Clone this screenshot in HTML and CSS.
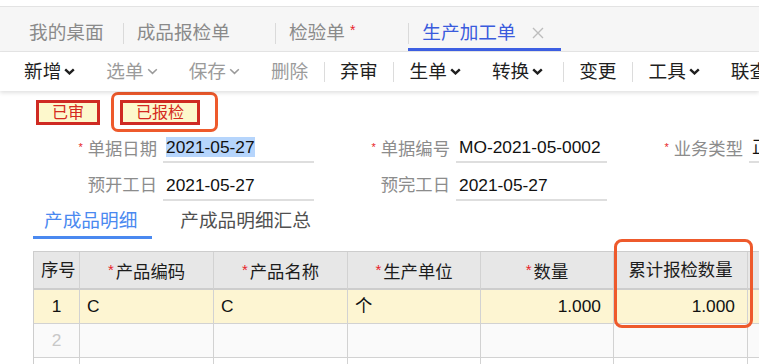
FILE: index.html
```html
<!DOCTYPE html>
<html lang="zh-CN">
<head>
<meta charset="utf-8">
<title>生产加工单</title>
<link rel="stylesheet" href="styles.css">
</head>
<body>
<nav class="tabbar">
  <div class="tab tab-home"><span class="tab-text">我的桌面</span></div>
  <div class="tab"><span class="tab-sep"></span><span class="tab-text">成品报检单</span><span class="tab-close is-hidden"><svg viewBox="0 0 12 12"><path d="M1 1L11 11M11 1L1 11"/></svg></span></div>
  <div class="tab"><span class="tab-sep"></span><span class="tab-text">检验单</span><span class="tab-dirty">*</span><span class="tab-close is-hidden"><svg viewBox="0 0 12 12"><path d="M1 1L11 11M11 1L1 11"/></svg></span></div>
  <div class="tab is-active"><span class="tab-sep"></span><span class="tab-text">生产加工单</span><span class="tab-close"><svg viewBox="0 0 12 12"><path d="M1 1L11 11M11 1L1 11"/></svg></span></div>
</nav>

<div class="toolbar">
  <span class="tool">新增<svg class="chev" viewBox="0 0 11 7"><path d="M1.2 1.3L5.5 5.4L9.8 1.3"/></svg></span>
  <span class="tool is-disabled">选单<svg class="chev" viewBox="0 0 11 7"><path d="M1.2 1.3L5.5 5.4L9.8 1.3"/></svg></span>
  <span class="tool is-disabled">保存<svg class="chev" viewBox="0 0 11 7"><path d="M1.2 1.3L5.5 5.4L9.8 1.3"/></svg></span>
  <span class="tool is-disabled">删除</span>
  <span class="tool-sep"></span>
  <span class="tool">弃审</span>
  <span class="tool-sep"></span>
  <span class="tool">生单<svg class="chev" viewBox="0 0 11 7"><path d="M1.2 1.3L5.5 5.4L9.8 1.3"/></svg></span>
  <span class="tool">转换<svg class="chev" viewBox="0 0 11 7"><path d="M1.2 1.3L5.5 5.4L9.8 1.3"/></svg></span>
  <span class="tool-sep tool-sep-wide"></span>
  <span class="tool">变更</span>
  <span class="tool-sep"></span>
  <span class="tool">工具<svg class="chev" viewBox="0 0 11 7"><path d="M1.2 1.3L5.5 5.4L9.8 1.3"/></svg></span>
  <span class="tool">联查</span>
</div>

<main class="content">
  <div class="status-row">
    <span class="badge">已审</span>
    <span class="callout"><span class="badge">已报检</span></span>
  </div>

  <div class="form">
    <div class="field"><span class="field-label"><i class="req">*</i>单据日期</span><div class="field-input"><span class="selected">2021-05-27</span></div></div>
    <div class="field"><span class="field-label"><i class="req">*</i>单据编号</span><div class="field-input">MO-2021-05-0002</div></div>
    <div class="field"><span class="field-label"><i class="req">*</i>业务类型</span><div class="field-input">正常生产</div></div>
    <div class="field"><span class="field-label">预开工日</span><div class="field-input">2021-05-27</div></div>
    <div class="field"><span class="field-label">预完工日</span><div class="field-input">2021-05-27</div></div>
  </div>

  <div class="subtabs">
    <span class="subtab is-active">产成品明细</span>
    <span class="subtab">产成品明细汇总</span>
  </div>

  <div class="grid">
    <div class="cell th">序号</div>
    <div class="cell th"><i class="req-th">*</i>产品编码</div>
    <div class="cell th"><i class="req-th">*</i>产品名称</div>
    <div class="cell th"><i class="req-th">*</i>生产单位</div>
    <div class="cell th"><i class="req-th">*</i>数量</div>
    <div class="cell th">累计报检数量</div>
    <div class="cell th"></div>

    <div class="cell row-cur idx">1</div>
    <div class="cell row-cur">C</div>
    <div class="cell row-cur">C</div>
    <div class="cell row-cur">个</div>
    <div class="cell row-cur num">1.000</div>
    <div class="cell row-cur num">1.000</div>
    <div class="cell row-cur"></div>

    <div class="cell row-alt idx muted">2</div>
    <div class="cell row-alt"></div>
    <div class="cell row-alt"></div>
    <div class="cell row-alt"></div>
    <div class="cell row-alt"></div>
    <div class="cell row-alt"></div>
    <div class="cell row-alt"></div>

    <div class="cell"></div>
    <div class="cell"></div>
    <div class="cell"></div>
    <div class="cell"></div>
    <div class="cell"></div>
    <div class="cell"></div>
    <div class="cell"></div>

    <div class="grid-mark"></div>
  </div>
</main>
</body>
</html>
```

FILE: styles.css
```css
* { box-sizing: border-box; }

html, body {
  margin: 0;
  padding: 0;
  background: #fff;
}

body {
  width: 759px;
  height: 364px;
  overflow: hidden;
  font-family: "Liberation Sans", "Noto Sans CJK SC", sans-serif;
  color: #1f1f1f;
}

/* ---------- window tabs ---------- */
.tabbar {
  margin-top: 6px;
  height: 46px;
  display: flex;
  padding-left: 15px;
  background: #f6f6f6;
  border-top: 1px solid #e3e3e3;
  border-bottom: 1px solid #e6e6e6;
  font-size: 18.67px;
  white-space: nowrap;
}

.tab {
  display: flex;
  align-items: center;
  height: 100%;
  padding-top: 11px;
  padding-right: 17px;
  border-bottom: 3px solid transparent;
  color: #8a8a8a;
}

.tab-home {
  padding-left: 14px;
  padding-right: 19px;
}

.tab-sep {
  width: 1px;
  height: 21px;
  margin-right: 13px;
  background: #dadada;
}

.tab-text { line-height: 22px; }

.tab-dirty {
  align-self: flex-start;
  margin-top: 5px;
  margin-left: 5px;
  margin-right: 8px;
  color: #e8232a;
  font-size: 14px;
  line-height: 14px;
}

.tab-close {
  display: flex;
  width: 12px;
  height: 12px;
  margin-left: 16px;
}

.tab-close svg {
  width: 12px;
  height: 12px;
  fill: none;
  stroke: #bdbdbd;
  stroke-width: 1.4;
}

.is-hidden { visibility: hidden; }

.tab.is-active {
  color: #3a5bdd;
  border-bottom-color: #3d5fe2;
}

/* ---------- toolbar ---------- */
.toolbar {
  position: relative;
  z-index: 1;
  height: 39px;
  display: flex;
  align-items: center;
  padding-left: 8.5px;
  background: #fff;
  box-shadow: 0 2px 4px rgba(0, 0, 0, 0.12);
  font-size: 18.67px;
  white-space: nowrap;
}

.tool {
  display: flex;
  align-items: center;
  padding: 0 15.5px;
  color: #1f1f1f;
  line-height: 22px;
}

.tool.is-disabled { color: #9b9b9b; }

.chev {
  width: 11px;
  height: 7px;
  margin-left: 3px;
  fill: none;
  stroke: currentColor;
  stroke-width: 2.4;
}

.tool.is-disabled .chev { stroke-width: 1.5; }

.tool-sep {
  flex: none;
  width: 1px;
  height: 20px;
  background: #dcdcdc;
}

.tool-sep-wide { margin-left: 4px; }

/* ---------- content ---------- */
.status-row {
  height: 40px;
  display: flex;
  align-items: center;
  padding-left: 36px;
  margin-top: 1px;
}

.badge {
  display: inline-block;
  height: 25px;
  padding: 0 13px;
  border: 3px solid #cf2a22;
  background: #fdf8cc;
  color: #d42a20;
  font-size: 16px;
  line-height: 19px;
}

.callout {
  display: flex;
  margin-left: 11px;
  padding: 5px 15px 4px 6px;
  border: 3px solid #ee5a2c;
  border-radius: 7px;
}

.form {
  display: grid;
  grid-template-columns: repeat(3, 291px);
  column-gap: 2px;
  row-gap: 11px;
  margin-top: 4px;
  padding-left: 23px;
  font-size: 17.33px;
}

.field {
  display: flex;
  height: 27px;
}

.field-label {
  flex: none;
  width: 140px;
  padding-right: 6px;
  text-align: right;
  color: #8c8c8c;
  line-height: 22px;
}

.req {
  font-style: normal;
  color: #e8232a;
  font-size: 11px;
  margin-right: 5px;
  vertical-align: 4px;
}

.field-input {
  flex: none;
  width: 151px;
  padding-left: 3px;
  border-bottom: 2px solid #dedede;
  color: #111;
  line-height: 22px;
  white-space: nowrap;
  overflow: hidden;
}

.selected { background: #b6d5fc; }

/* ---------- sub tabs ---------- */
.subtabs {
  display: flex;
  margin-top: 4px;
  padding-left: 33px;
  font-size: 18.67px;
}

.subtab {
  height: 34px;
  padding: 4px 15px 0 11px;
  line-height: 23px;
  color: #505050;
  border-bottom: 3px solid transparent;
}

.subtab + .subtab { margin-left: 17px; }

.subtab.is-active {
  color: #4a89f0;
  border-bottom-color: #4a89f0;
}

/* ---------- grid ---------- */
.grid {
  position: relative;
  display: grid;
  grid-template-columns: 46px 134px 134px 133px 133px 134px 134px;
  width: max-content;
  margin-top: 12px;
  margin-left: 33px;
  border-top: 1px solid #cdcdcd;
  border-left: 1px solid #cdcdcd;
  font-size: 17.33px;
}

.cell {
  height: 34px;
  padding: 0 7px;
  border-right: 1px solid #d2d2d2;
  border-bottom: 1px solid #d2d2d2;
  line-height: 33px;
  color: #111;
  white-space: nowrap;
}

.th {
  height: 38px;
  border-bottom: 2px solid #cdcdcd;
  background: #e7e7e7;
  line-height: 36px;
  text-align: center;
  color: #1c1c1c;
}

.req-th {
  font-style: normal;
  color: #e8232a;
  font-size: 15px;
  margin-right: 2px;
  vertical-align: 3px;
}

.row-cur { background: #fdf5d2; }
.row-alt { background: #fafafa; }

.idx { text-align: center; }
.num { text-align: right; padding-right: 12px; }
.muted { color: #c8c8c8; }

.grid-mark {
  position: absolute;
  left: 580px;
  top: -13px;
  width: 139px;
  height: 89px;
  border: 3px solid #ee5a2c;
  border-radius: 8px;
  pointer-events: none;
}
```
